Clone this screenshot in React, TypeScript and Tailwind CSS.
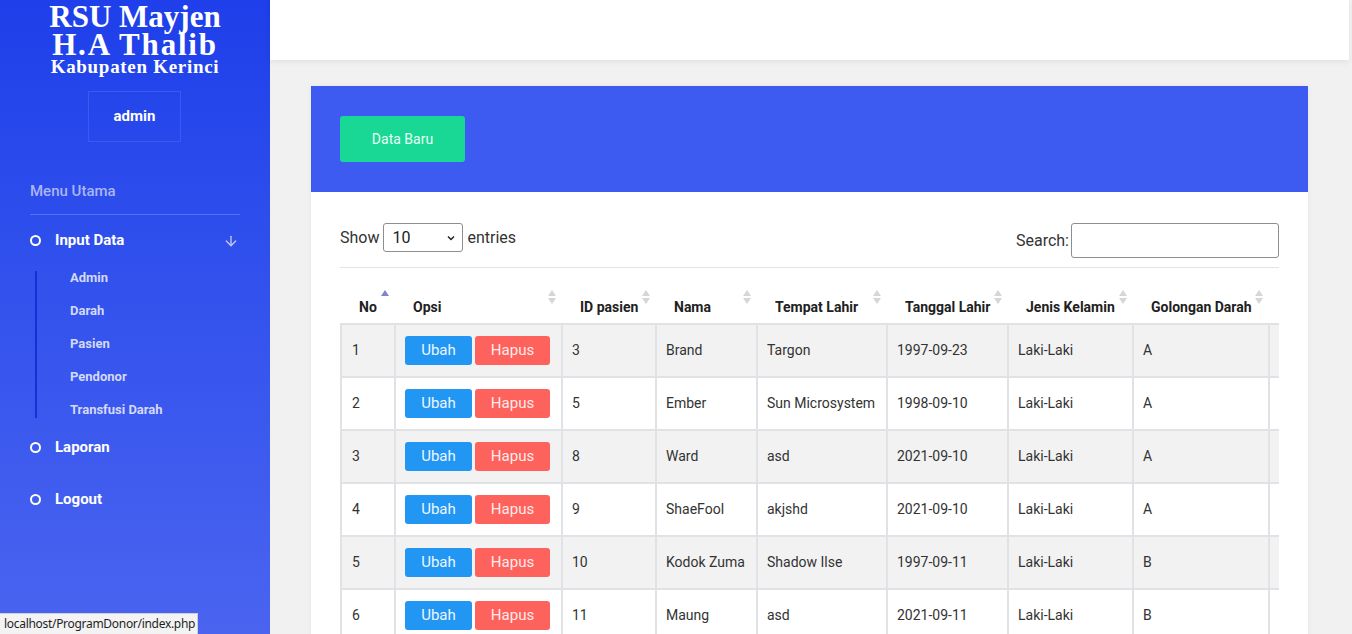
import { ArrowDown } from 'lucide-react';

const rows = [
  { no: 1, id: '3', nama: 'Brand', tempat: 'Targon', tgl: '1997-09-23', jk: 'Laki-Laki', gol: 'A' },
  { no: 2, id: '5', nama: 'Ember', tempat: 'Sun Microsystem', tgl: '1998-09-10', jk: 'Laki-Laki', gol: 'A' },
  { no: 3, id: '8', nama: 'Ward', tempat: 'asd', tgl: '2021-09-10', jk: 'Laki-Laki', gol: 'A' },
  { no: 4, id: '9', nama: 'ShaeFool', tempat: 'akjshd', tgl: '2021-09-10', jk: 'Laki-Laki', gol: 'A' },
  { no: 5, id: '10', nama: 'Kodok Zuma', tempat: 'Shadow Ilse', tgl: '1997-09-11', jk: 'Laki-Laki', gol: 'B' },
  { no: 6, id: '11', nama: 'Maung', tempat: 'asd', tgl: '2021-09-11', jk: 'Laki-Laki', gol: 'B' },
  { no: 7, id: '12', nama: 'Raka', tempat: 'asd', tgl: '2021-09-12', jk: 'Laki-Laki', gol: 'O' },
];

const headers = [
  { label: 'No', w: 'w-[54px]', active: true },
  { label: 'Opsi', w: 'w-[167px]' },
  { label: 'ID pasien', w: 'w-[94px]' },
  { label: 'Nama', w: 'w-[101px]' },
  { label: 'Tempat Lahir', w: 'w-[130px]' },
  { label: 'Tanggal Lahir', w: 'w-[121px]' },
  { label: 'Jenis Kelamin', w: 'w-[125px]' },
  { label: 'Golongan Darah', w: 'w-[136px]' },
  { label: '', w: 'w-[110px]' },
];

function SortIcon({ active }: { active?: boolean }) {
  if (active) {
    return (
      <span className="absolute right-[6px] top-[22px] flex flex-col">
        <span className="h-0 w-0 border-x-[4px] border-b-[6px] border-x-transparent border-b-[#7f83d6]" />
      </span>
    );
  }
  return (
    <span className="absolute right-[6px] top-[22px] flex flex-col gap-[2px]">
      <span className="h-0 w-0 border-x-[4px] border-b-[6px] border-x-transparent border-b-[#d6d6d9]" />
      <span className="h-0 w-0 border-x-[4px] border-t-[6px] border-x-transparent border-t-[#d6d6d9]" />
    </span>
  );
}

function MenuItem({ label }: { label: string }) {
  return (
    <div className="flex h-[24px] items-center">
      <span className="ml-[30px] h-[11px] w-[11px] rounded-full border-[2.5px] border-white" />
      <span className="ml-[14px] text-[15px] font-bold text-white">{label}</span>
    </div>
  );
}

const subItems = ['Admin', 'Darah', 'Pasien', 'Pendonor', 'Transfusi Darah'];

export default function App() {
  return (
    <div className="relative flex h-[634px] w-[1352px] overflow-hidden bg-[#f1f1f1]" style={{ fontFamily: 'Roboto, sans-serif' }}>
      {/* sidebar */}
      <aside className="flex w-[270px] shrink-0 flex-col bg-linear-to-b from-[#1e3fea] to-[#4a64f0]">
        <div
          className="pt-[3px] text-center font-bold text-white"
          style={{ fontFamily: '"Liberation Serif", serif' }}
        >
          <div className="text-[31px] leading-[28px]">RSU Mayjen</div>
          <div className="text-[31px] leading-[28px] tracking-[1.8px]">H.A Thalib</div>
          <div className="text-[19px] leading-[16px] tracking-[0.7px]">Kabupaten Kerinci</div>
        </div>

        <div className="ml-[88px] mt-[16px] flex h-[51px] w-[93px] items-center justify-center border border-[#3b5af2] text-[15px] font-bold text-white">
          admin
        </div>

        <div className="ml-[30px] mt-[38px] text-[15px] font-medium text-[#a9b6f6]">Menu Utama</div>
        <div className="ml-[30px] mt-[11px] h-px w-[210px] bg-[#5470f3]" />

        <div className="mt-[14px] flex h-[24px] items-center">
          <span className="ml-[30px] h-[11px] w-[11px] rounded-full border-[2.5px] border-white" />
          <span className="ml-[14px] text-[15px] font-bold text-white">Input Data</span>
          <ArrowDown className="ml-auto mr-[31px] text-[#c3cbf8]" size={16} strokeWidth={2} />
        </div>

        <div className="ml-[35px] mt-[18px] flex w-[200px] flex-col border-l-2 border-[#1431d6]">
          {subItems.map((s, i) => (
            <div
              key={s}
              className={`${i === subItems.length - 1 ? 'h-[15px]' : 'h-[33px]'} pl-[33px] text-[13px] font-bold leading-[13px] text-[#d3daf9]`}
            >
              {s}
            </div>
          ))}
        </div>

        <div className="mt-[18px]">
          <MenuItem label="Laporan" />
        </div>
        <div className="mt-[28px]">
          <MenuItem label="Logout" />
        </div>
      </aside>

      {/* main */}
      <main className="mr-[3px] flex w-[1079px] shrink-0 flex-col">
        <div className="h-[60px] shrink-0 bg-white shadow-[0_2px_6px_rgba(0,0,0,0.07)]" />

        <div className="mx-[41px] mt-[26px] flex min-w-0 flex-1 flex-col bg-white shadow-[0_0_6px_rgba(0,0,0,0.05)]">
          <div className="h-[106px] bg-[#3d5af1] pl-[29px] pt-[30px]">
            <button className="h-[46px] w-[125px] rounded-[3px] bg-[#19d895] text-[14px] text-[#eafff6]">
              Data Baru
            </button>
          </div>

          <div className="px-[29px] pt-[31px]">
            <div className="flex items-start justify-between text-[16px] text-[#333]">
              <div className="flex items-center gap-[4px]">
                <span>Show</span>
                <div className="flex h-[29px] w-[80px] items-center justify-between rounded-[3px] border border-[#8e8e8e] pl-[8px] pr-[6px] text-[#222]">
                  <span>10</span>
                  <svg width="10" height="10" viewBox="0 0 10 10" fill="none" stroke="#222" strokeWidth="1.5">
                    <path d="M2 3.5l3 3 3-3" />
                  </svg>
                </div>
                <span>entries</span>
              </div>
              <div className="flex items-center gap-[2px]">
                <span className="mt-[1px]">Search:</span>
                <div className="h-[35px] w-[208px] rounded-[3px] border border-[#8e8e8e]" />
              </div>
            </div>

            <div className="mt-[9px] w-[939px] overflow-hidden border-t border-[#e3e3e3]">
              <table className="w-[1038px] table-fixed border-collapse text-left text-[14px]">
                <thead>
                  <tr className="h-[56px] border-b border-[#111]">
                    {headers.map((h, i) => (
                      <th
                        key={i}
                        className={`relative ${h.w} whitespace-nowrap pb-[5px] pl-[18px] pt-[24px] align-bottom font-bold text-[#212121]`}
                      >
                        {h.label}
                        {h.label && <SortIcon active={h.active} />}
                      </th>
                    ))}
                  </tr>
                </thead>
                <tbody>
                  {rows.map((r, i) => (
                    <tr key={r.no} className={`h-[53px] ${i % 2 === 0 ? 'bg-[#f2f2f2]' : 'bg-white'} text-[#333]`}>
                      <td className="border-2 border-[#e1e2e5] pl-[10px]">{r.no}</td>
                      <td className="border-2 border-[#e1e2e5] pl-[9px]">
                        <div className="flex gap-[3px]">
                          <span className="flex h-[29px] w-[67px] items-center justify-center rounded-[3px] bg-[#2196f3] text-[15px] text-[#eef6ff]">
                            Ubah
                          </span>
                          <span className="flex h-[29px] w-[75px] items-center justify-center rounded-[3px] bg-[#fe625c] text-[15px] text-[#ffeceb]">
                            Hapus
                          </span>
                        </div>
                      </td>
                      <td className="border-2 border-[#e1e2e5] pl-[9px]">{r.id}</td>
                      <td className="whitespace-nowrap border-2 border-[#e1e2e5] pl-[9px]">{r.nama}</td>
                      <td className="whitespace-nowrap border-2 border-[#e1e2e5] pl-[9px]">{r.tempat}</td>
                      <td className="border-2 border-[#e1e2e5] pl-[9px]">{r.tgl}</td>
                      <td className="border-2 border-[#e1e2e5] pl-[9px]">{r.jk}</td>
                      <td className="border-2 border-[#e1e2e5] pl-[9px]">{r.gol}</td>
                      <td className="border-2 border-[#e1e2e5] pl-[9px]" />
                    </tr>
                  ))}
                </tbody>
              </table>
            </div>
          </div>
        </div>
      </main>

      {/* browser status bubble */}
      <div
        className="absolute bottom-0 left-0 flex h-[21px] w-[198px] items-center border-r border-t border-[#cfcfcf] bg-[#f3f3f3] pl-[4px] text-[12px] tracking-[-0.3px] text-[#1f1f1f]"
        style={{ fontFamily: '"Noto Sans", sans-serif' }}
      >
        localhost/ProgramDonor/index.php
      </div>
    </div>
  );
}
